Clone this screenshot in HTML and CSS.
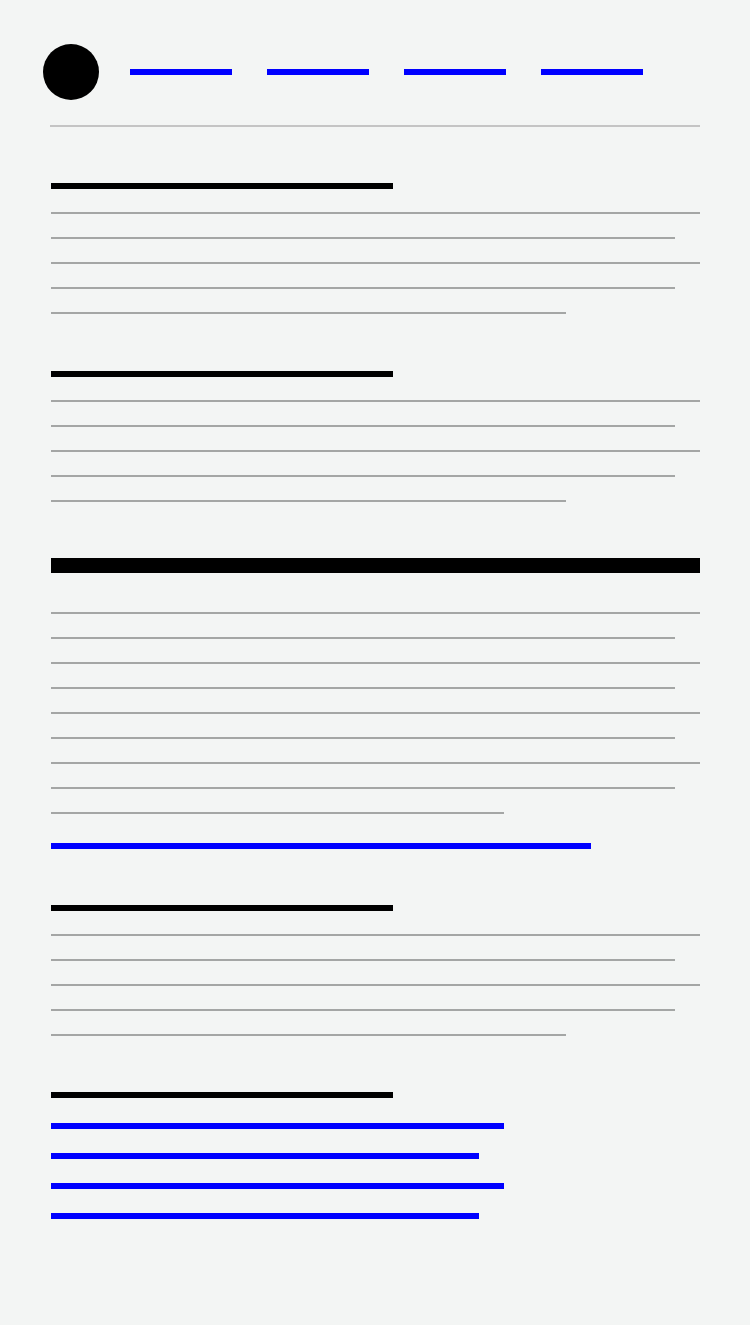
FILE: index.html
```html
<!DOCTYPE html>
<html lang="en">
<head>
<meta charset="utf-8">
<meta name="viewport" content="width=device-width, initial-scale=1">
<title>Wireframe</title>
<link rel="stylesheet" href="styles.css">
</head>
<body>
<div class="page">
  <header class="header">
    <a class="logo" href="#" aria-label="Home"></a>
    <nav class="nav" aria-label="Main">
      <a class="bar link" href="#" aria-label="Link 1"></a>
      <a class="bar link" href="#" aria-label="Link 2"></a>
      <a class="bar link" href="#" aria-label="Link 3"></a>
      <a class="bar link" href="#" aria-label="Link 4"></a>
    </nav>
  </header>
  <hr class="divider">
  <main class="content">
    <section class="section">
      <h2 class="bar heading" aria-label="Heading"></h2>
      <div class="lines">
        <div class="line"></div>
        <div class="line line-short"></div>
        <div class="line"></div>
        <div class="line line-short"></div>
        <div class="line line-last"></div>
      </div>
    </section>
    <section class="section section-second">
      <h2 class="bar heading" aria-label="Heading"></h2>
      <div class="lines">
        <div class="line"></div>
        <div class="line line-short"></div>
        <div class="line"></div>
        <div class="line line-short"></div>
        <div class="line line-last"></div>
      </div>
    </section>
    <section class="section">
      <h1 class="title" aria-label="Title"></h1>
      <div class="lines">
        <div class="line"></div>
        <div class="line line-short"></div>
        <div class="line"></div>
        <div class="line line-short"></div>
        <div class="line"></div>
        <div class="line line-short"></div>
        <div class="line"></div>
        <div class="line line-short"></div>
        <div class="line line-end"></div>
      </div>
      <a class="bar link more" href="#" aria-label="Read more"></a>
    </section>
    <section class="section">
      <h2 class="bar heading" aria-label="Heading"></h2>
      <div class="lines">
        <div class="line"></div>
        <div class="line line-short"></div>
        <div class="line"></div>
        <div class="line line-short"></div>
        <div class="line line-last"></div>
      </div>
    </section>
    <section class="section">
      <h2 class="bar heading" aria-label="Heading"></h2>
      <div class="links">
        <a class="bar link link-long" href="#" aria-label="Link 1"></a>
        <a class="bar link link-mid" href="#" aria-label="Link 2"></a>
        <a class="bar link link-long" href="#" aria-label="Link 3"></a>
        <a class="bar link link-mid" href="#" aria-label="Link 4"></a>
      </div>
    </section>
  </main>
</div>
</body>
</html>
```

FILE: styles.css
```css
* {
  box-sizing: border-box;
}

body {
  margin: 0;
  background: #f3f5f4;
  font-family: "Liberation Sans", sans-serif;
}

.page {
  padding: 44px 50px 56px;
}

.header {
  display: flex;
  align-items: center;
  gap: 31px;
  margin-left: -7px;
}

.logo {
  flex: none;
  width: 56px;
  height: 56px;
  border-radius: 50%;
  background: #000;
}

.nav {
  display: flex;
  flex: 1;
  gap: 35px;
}

.nav .link {
  width: 102px;
}

.divider {
  height: 2px;
  margin: 25px 0 0;
  border: 0;
  background: #c4c4c4;
}

.content {
  padding-left: 1px;
}

.section {
  padding-top: 56px;
}

.section-second {
  padding-top: 57px;
}

.bar {
  display: block;
  height: 6px;
  max-width: 100%;
}

.link {
  background: #00f;
}

.heading {
  width: 342px;
  margin: 0 0 23px;
  background: #000;
}

.title {
  height: 15px;
  margin: 0 0 39px;
  background: #000;
}

.lines {
  display: flex;
  flex-direction: column;
  gap: 23px;
}

.line {
  height: 2px;
  max-width: 100%;
  background: #a4a6a5;
}

.line-short {
  margin-right: 25px;
}

.line-last {
  width: 515px;
}

.line-end {
  width: 453px;
}

.more {
  width: 540px;
  margin-top: 29px;
}

.links {
  display: flex;
  flex-direction: column;
  gap: 24px;
  padding-top: 2px;
}

.link-long {
  width: 453px;
}

.link-mid {
  width: 428px;
}
```
